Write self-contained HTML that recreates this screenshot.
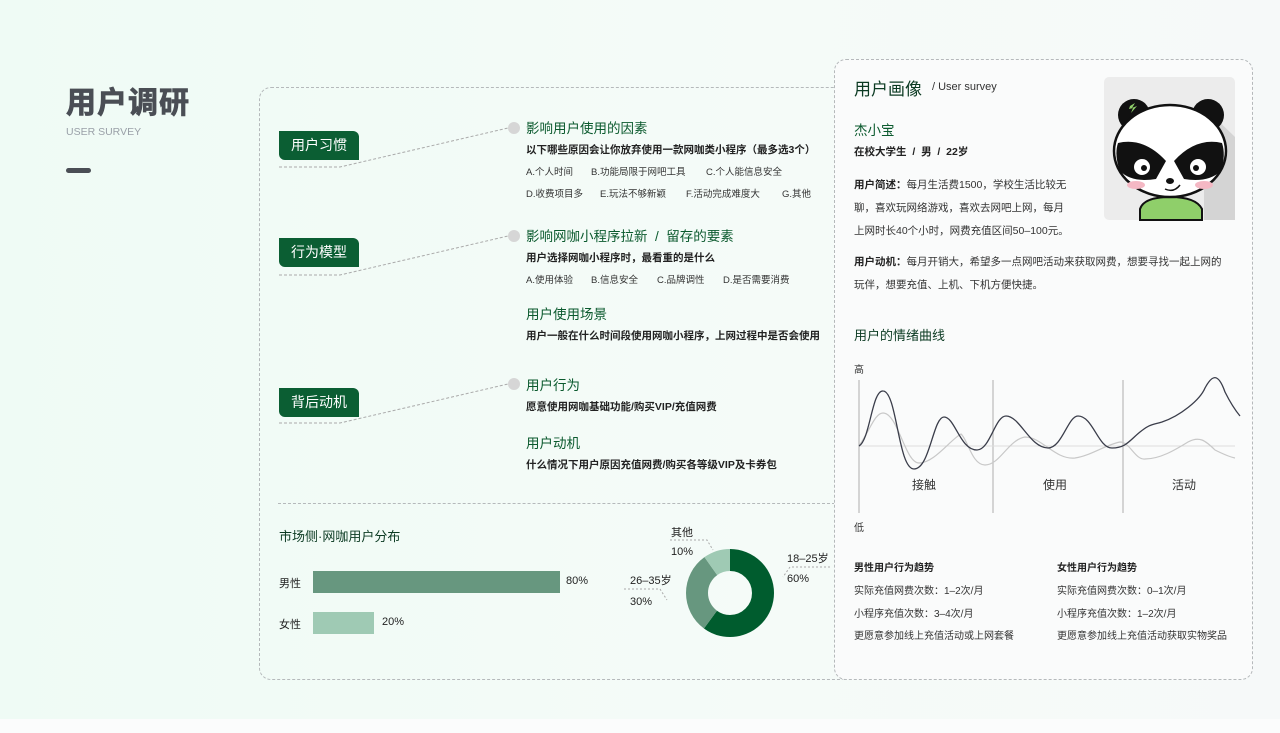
<!DOCTYPE html>
<html><head><meta charset="utf-8">
<style>
*{margin:0;padding:0;box-sizing:border-box}
body{width:1280px;height:733px;overflow:hidden;position:relative;font-family:"Liberation Sans","Noto Sans CJK SC",sans-serif;background:linear-gradient(90deg,#effbf5 0%,#f5fbf8 60%,#f6f9f9 100%);color:#222}
.abs{position:absolute;white-space:nowrap}
.tag{position:absolute;left:279px;width:80px;height:29px;background:#0b5e33;color:#fff;font-size:14px;line-height:29px;text-align:center;border-radius:0 6px 0 6px}
.h{font-size:13.5px;color:#0b5a2e}
.b{font-size:10.5px;font-weight:bold;color:#222}
.s{font-size:9.5px;color:#333}
.dot{position:absolute;width:12px;height:12px;border-radius:50%;background:#d6d6d6}
</style></head><body>
<div style="position:absolute;left:0;top:719px;width:1280px;height:14px;background:#fbfcfc"></div>

<div class="abs" style="left:66px;top:78px;font-size:30px;font-weight:bold;color:#4a4e55;letter-spacing:1px;-webkit-text-stroke:0.8px #4a4e55">用户调研</div>
<div class="abs" style="left:66px;top:126px;font-size:10.5px;color:#9aa0a8">USER SURVEY</div>
<div style="position:absolute;left:66px;top:168px;width:25px;height:5px;border-radius:3px;background:#4a4e55"></div>

<div style="position:absolute;left:259px;top:87px;width:600px;height:593px;border:1px dashed #b5b9bb;border-radius:12px"></div>
<div style="position:absolute;left:278px;top:503px;width:557px;border-top:1px dashed #b5b9bb"></div>

<svg class="abs" style="left:0;top:0" width="840" height="500">
<g stroke="#aaa" stroke-dasharray="3,2" fill="none" stroke-width="1">
<path d="M279 167H340L508 128"/><path d="M279 275H340L508 236"/><path d="M279 423H340L508 384"/>
</g></svg>
<div class="tag" style="top:131px">用户习惯</div>
<div class="tag" style="top:238px">行为模型</div>
<div class="tag" style="top:388px">背后动机</div>
<div class="dot" style="left:508px;top:122px"></div>
<div class="dot" style="left:508px;top:230px"></div>
<div class="dot" style="left:508px;top:378px"></div>

<div class="abs h" style="left:526px;top:117px">影响用户使用的因素</div>
<div class="abs b" style="left:526px;top:142px">以下哪些原因会让你放弃使用一款网咖类小程序（最多选3个）</div>
<div class="abs s" style="left:526px;top:164px">A.个人时间</div>
<div class="abs s" style="left:591px;top:164px">B.功能局限于网吧工具</div>
<div class="abs s" style="left:706px;top:164px">C.个人能信息安全</div>
<div class="abs s" style="left:526px;top:186px">D.收费项目多</div>
<div class="abs s" style="left:600px;top:186px">E.玩法不够新颖</div>
<div class="abs s" style="left:686px;top:186px">F.活动完成难度大</div>
<div class="abs s" style="left:782px;top:186px">G.其他</div>

<div class="abs h" style="left:526px;top:225px">影响网咖小程序拉新 &nbsp;/ &nbsp;留存的要素</div>
<div class="abs b" style="left:526px;top:250px">用户选择网咖小程序时，最看重的是什么</div>
<div class="abs s" style="left:526px;top:272px">A.使用体验</div>
<div class="abs s" style="left:591px;top:272px">B.信息安全</div>
<div class="abs s" style="left:657px;top:272px">C.品牌调性</div>
<div class="abs s" style="left:723px;top:272px">D.是否需要消费</div>
<div class="abs h" style="left:526px;top:303px">用户使用场景</div>
<div class="abs b" style="left:526px;top:328px">用户一般在什么时间段使用网咖小程序，上网过程中是否会使用</div>
<div class="abs h" style="left:526px;top:374px">用户行为</div>
<div class="abs b" style="left:526px;top:399px">愿意使用网咖基础功能/购买VIP/充值网费</div>
<div class="abs h" style="left:526px;top:432px">用户动机</div>
<div class="abs b" style="left:526px;top:457px">什么情况下用户原因充值网费/购买各等级VIP及卡券包</div>

<div class="abs" style="left:279px;top:526px;font-size:13px;color:#0b3a22">市场侧·网咖用户分布</div>
<div class="abs" style="left:279px;top:575px;font-size:11px">男性</div>
<div style="position:absolute;left:313px;top:571px;width:247px;height:22px;background:#67977f"></div>
<div class="abs" style="left:566px;top:575px;font-size:11px">80%</div>
<div class="abs" style="left:279px;top:616px;font-size:11px">女性</div>
<div style="position:absolute;left:313px;top:612px;width:61px;height:22px;background:#9fcab4"></div>
<div class="abs" style="left:382px;top:616px;font-size:11px">20%</div>

<svg class="abs" style="left:620px;top:520px" width="220" height="130">
<g transform="translate(110,73)">
<circle r="33" fill="none" stroke="#005c2e" stroke-width="22" stroke-dasharray="124.4 207.3" transform="rotate(-90)"/>
<circle r="33" fill="none" stroke="#67977f" stroke-width="22" stroke-dasharray="0 124.4 62.2 207.3" transform="rotate(-90)"/>
<circle r="33" fill="none" stroke="#9fcab4" stroke-width="22" stroke-dasharray="0 186.6 20.7 207.3" transform="rotate(-90)"/>
</g>
<g stroke="#aaa" stroke-dasharray="2,2" fill="none"><path d="M50 20H87L93 30"/><path d="M4 69H40L47 80"/><path d="M210 47H170L163 57"/></g>
</svg>
<div class="abs" style="left:671px;top:524px;font-size:11px">其他</div>
<div class="abs" style="left:671px;top:546px;font-size:11px">10%</div>
<div class="abs" style="left:630px;top:572px;font-size:11px">26–35岁</div>
<div class="abs" style="left:630px;top:596px;font-size:11px">30%</div>
<div class="abs" style="left:787px;top:550px;font-size:11px">18–25岁</div>
<div class="abs" style="left:787px;top:573px;font-size:11px">60%</div>

<div style="position:absolute;left:834px;top:59px;width:419px;height:621px;border:1px dashed #b5b9bb;border-radius:12px;background:#fafbfb"></div>
<div class="abs" style="left:854px;top:75px;font-size:17px;color:#0b3a22">用户画像</div>
<div class="abs" style="left:932px;top:81px;font-size:11px;color:#333">/ User survey</div>
<div class="abs" style="left:854px;top:119px;font-size:13.5px;color:#0b5a2e">杰小宝</div>
<div class="abs" style="left:854px;top:144px;font-size:10.5px;font-weight:bold">在校大学生 &nbsp;/ &nbsp;男 &nbsp;/ &nbsp;22岁</div>
<div class="abs" style="left:854px;top:174px;font-size:10.5px;line-height:23px;color:#333"><b style="color:#222">用户简述：</b>每月生活费1500，学校生活比较无<br>聊，喜欢玩网络游戏，喜欢去网吧上网，每月<br>上网时长40个小时，网费充值区间50–100元。</div>
<div class="abs" style="left:854px;top:251px;font-size:10.5px;line-height:23px;color:#333"><b style="color:#222">用户动机：</b>每月开销大，希望多一点网吧活动来获取网费，想要寻找一起上网的<br>玩伴，想要充值、上机、下机方便快捷。</div>

<svg class="abs" style="left:1104px;top:77px" width="132" height="144">
<rect width="131" height="143" rx="5" fill="#ececec"/>
<path d="M100 30L131 60V143H100Z" fill="#d4d4d4"/>
<path d="M36 143V132Q40 120 66 120Q92 120 98 132V143Z" fill="#8fcf6a" stroke="#111" stroke-width="2"/>
<circle cx="30" cy="38" r="16" fill="#111"/><circle cx="104" cy="38" r="16" fill="#111"/>
<path d="M26 29l5-3-3 5 5-2-6 7 2-5-4 1z" fill="#8fcf6a"/>
<ellipse cx="66" cy="74" rx="56" ry="46" fill="#fff" stroke="#111" stroke-width="2.5"/>
<path d="M14 66Q40 60 62 84L52 102Q28 106 16 94Q10 78 14 66Z" fill="#111"/>
<path d="M118 66Q92 60 70 84L80 102Q104 106 117 94Q122 78 118 66Z" fill="#111"/>
<circle cx="38" cy="90" r="8" fill="#fff"/><circle cx="94" cy="90" r="8" fill="#fff"/>
<circle cx="40" cy="91" r="3" fill="#111"/><circle cx="92" cy="91" r="3" fill="#111"/>
<ellipse cx="66" cy="104" rx="4" ry="3" fill="#111"/>
<path d="M61 112Q70 116 76 108" stroke="#111" stroke-width="1.5" fill="none"/>
<ellipse cx="32" cy="108" rx="9" ry="4" fill="#f4b8c4"/><ellipse cx="100" cy="108" rx="9" ry="4" fill="#f4b8c4"/>
</svg>

<div class="abs" style="left:854px;top:325px;font-size:13px;color:#0b3a22">用户的情绪曲线</div>
<div class="abs" style="left:854px;top:361px;font-size:10px;color:#333">高</div>
<div class="abs" style="left:854px;top:519px;font-size:10px;color:#333">低</div>
<svg class="abs" style="left:850px;top:370px" width="400" height="150">
<g stroke="#bbb" stroke-width="1.2"><path d="M9 10V143"/><path d="M143 10V143"/><path d="M273 10V143"/></g>
<path d="M9 76H385" stroke="#ddd" stroke-width="1"/>
<path d="M9 76C20 60 25 43 33 43C48 43 55 93 69 93C84 93 100 70 111 64C118 70 122 95 135 95C150 95 158 70 175 67C192 67 205 90 225 88C240 86 255 75 270 72C280 72 285 90 295 89C310 89 325 80 338 72C349 66 355 70 365 80C375 85 380 87 385 88" stroke="#c8c8c8" stroke-width="1.2" fill="none"/>
<path d="M9 76C20 70 22 20 33 21C47 21 48 99 64 99C80 99 83 47 94 47C105 47 110 80 127 80C140 80 145 46 156 46C170 46 180 78 198 78C212 78 218 46 228 46C243 46 248 78 262 78C276 78 280 70 290 62C300 54 302 55 312 52C330 46 350 30 355 18C362 5 368 2 375 22C380 32 385 40 390 46" stroke="#3a3d4a" stroke-width="1.3" fill="none"/>
</svg>
<div class="abs" style="left:912px;top:476px;font-size:12px;color:#333">接触</div>
<div class="abs" style="left:1043px;top:476px;font-size:12px;color:#333">使用</div>
<div class="abs" style="left:1172px;top:476px;font-size:12px;color:#333">活动</div>

<div class="abs" style="left:854px;top:559px;font-size:10px;font-weight:bold">男性用户行为趋势</div>
<div class="abs" style="left:854px;top:582px;font-size:10px;color:#333">实际充值网费次数：1–2次/月</div>
<div class="abs" style="left:854px;top:605px;font-size:10px;color:#333">小程序充值次数：3–4次/月</div>
<div class="abs" style="left:854px;top:627px;font-size:10px;color:#333">更愿意参加线上充值活动或上网套餐</div>
<div class="abs" style="left:1057px;top:559px;font-size:10px;font-weight:bold">女性用户行为趋势</div>
<div class="abs" style="left:1057px;top:582px;font-size:10px;color:#333">实际充值网费次数：0–1次/月</div>
<div class="abs" style="left:1057px;top:605px;font-size:10px;color:#333">小程序充值次数：1–2次/月</div>
<div class="abs" style="left:1057px;top:627px;font-size:10px;color:#333">更愿意参加线上充值活动获取实物奖品</div>
</body></html>
